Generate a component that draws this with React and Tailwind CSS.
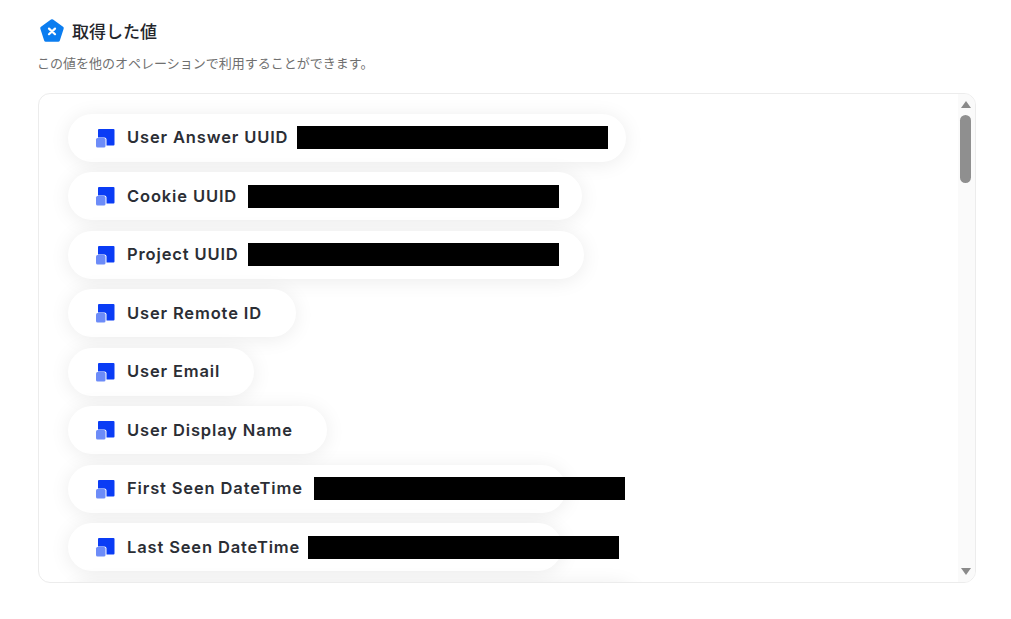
import React from 'react';

const rows = [
    { label: 'User Answer UUID', width: 558, mask: 297 },
    { label: 'Cookie UUID', width: 514, mask: 248 },
    { label: 'Project UUID', width: 516, mask: 248 },
    { label: 'User Remote ID', width: 228 },
    { label: 'User Email', width: 186 },
    { label: 'User Display Name', width: 259 },
    { label: 'First Seen DateTime', width: 498, mask: 314 },
    { label: 'Last Seen DateTime', width: 494, mask: 308 },
    { label: '', width: 570 },
];

const FieldIcon = () => (
    <svg width="20" height="20" viewBox="0 0 20 20" className="shrink-0">
        <rect x="3" y="1" width="16.5" height="16.5" rx="1" fill="#0a3cf5" />
        <rect x="0.5" y="9.5" width="11" height="11" rx="2" fill="#fff" />
        <rect x="1" y="10" width="9.5" height="9.5" rx="1.5" fill="#6d8cf8" />
    </svg>
);

const AppLogo = () => (
    <svg width="26" height="26" viewBox="0 0 26 26" className="shrink-0">
        <path d="M13 3 L23 10.2 L19.2 22 L6.8 22 L3 10.2 Z" fill="#0b7df0" stroke="#0b7df0" strokeWidth="3.5" strokeLinejoin="round" />
        <path d="M10 10.6 L16 16.2 M16 10.6 L10 16.2" stroke="#fff" strokeWidth="2.2" strokeLinecap="round" />
    </svg>
);

const FieldPill = ({ label, width, mask }) => (
    <div
        className="relative flex h-[48px] mb-[10.5px] items-center shrink-0 rounded-full bg-white pl-[27px] shadow-[0_2px_20px_rgba(0,0,0,0.08)]"
        style={{ width }}
    >
        {label && <FieldIcon />}
        <span className="ml-[12px] whitespace-nowrap text-[16.5px] font-semibold tracking-[0.052em] text-[#2b2e35]">{label}</span>
        {mask && (
            <div className="absolute top-[12.5px] h-[23px] w-[311px] bg-black" style={{ left: mask - 68 }} />
        )}
    </div>
);

const App = () => {
    return (
        <div className="h-[619px] w-[1011px] overflow-hidden bg-white pl-[38px] pt-[18px] font-['Inter','Noto_Sans_CJK_JP',sans-serif]">
            <div className="flex h-[26px] items-center">
                <div className="ml-px">
                    <AppLogo />
                </div>
                <h2 className="ml-[7px] -mt-[2px] font-['Noto_Sans_CJK_JP',sans-serif] text-[17px] font-medium leading-none text-[#24262b]">取得した値</h2>
            </div>
            <p className="mt-[10px] h-[18px] -ml-px font-['Noto_Sans_CJK_JP',sans-serif] text-[13px] leading-[18px] text-[#707070]">
                この値を他のオペレーションで利用することができます。
            </p>
            <div className="mt-[21px] flex h-[490px] w-[938px] overflow-hidden rounded-[12px] border border-[#ececec]">
                <div className="flex min-w-0 flex-1 flex-col pl-[29px] pt-[19.5px]">
                    {rows.map((row) => (
                        <FieldPill key={row.label} {...row} />
                    ))}
                </div>
                <div className="flex w-[17px] shrink-0 flex-col items-center bg-[#fafafa] pr-[2px]">
                    <div className="mt-[7px] h-0 w-0 border-x-[5px] border-b-[7px] border-x-transparent border-b-[#8a8a8a]" />
                    <div className="mt-[7px] h-[68px] w-[11px] rounded-full bg-[#8f8f8f]" />
                    <div className="mt-auto mb-[7px] h-0 w-0 border-x-[5px] border-t-[7px] border-x-transparent border-t-[#8a8a8a]" />
                </div>
            </div>
        </div>
    );
};

export default App;
